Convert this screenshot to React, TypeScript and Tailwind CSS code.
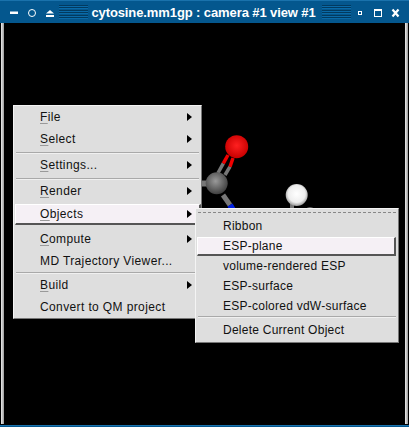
import React from "react";

const sans = "font-['Liberation_Sans',Arial,sans-serif]";

function Stripes() {
  return (
    <div className="flex h-[14px] w-[29px] shrink-0 flex-col justify-between overflow-hidden">
      {[0, 1, 2, 3, 4, 5].map((i) => (
        <div key={i} className="h-[2px] bg-[#023a60] border-b border-[#0a6aa8]" />
      ))}
    </div>
  );
}

function TitleBar() {
  return (
    <div className="flex h-[23px] items-center bg-[#04578e] pl-[10px] pr-[9px] border-t border-[#1a72ac]">
      <svg width="44" height="14" viewBox="0 0 44 14" className="shrink-0">
        <rect x="0" y="6.5" width="8" height="2.5" fill="#fff" />
        <circle cx="22" cy="8" r="3.5" fill="none" stroke="#fff" strokeWidth="1" />
        <path d="M36 8.5 L40 5 L44 8.5 Z" fill="#fff" />
        <rect x="36" y="10" width="8" height="2" fill="#fff" />
      </svg>
      <div className="ml-[5px]">
        <Stripes />
      </div>
      <div className={`${sans} flex-1 pr-[3px] pt-[1px] text-center text-[13px] font-bold leading-none text-white tracking-[-0.1px] whitespace-nowrap`}>
        cytosine.mm1gp : camera #1 view #1
      </div>
      <Stripes />
      <svg width="49" height="14" viewBox="0 0 49 14" className="shrink-0">
        <rect x="7.5" y="6.5" width="3" height="3" fill="none" stroke="#fff" />
        <rect x="23.5" y="4.5" width="7" height="7" fill="none" stroke="#fff" />
        <rect x="23" y="4" width="8" height="2" fill="#fff" />
        <path d="M41.5 4.5 L47.5 11.5 M47.5 4.5 L41.5 11.5" stroke="#fff" strokeWidth="2.2" />
      </svg>
    </div>
  );
}

function Molecule() {
  return (
    <svg width="140" height="100" viewBox="0 0 140 100" className="absolute left-[195px] top-[125px]">
      <defs>
        <radialGradient id="red" cx="0.5" cy="0.45" r="0.55">
          <stop offset="0" stopColor="#ff2020" />
          <stop offset="1" stopColor="#c80000" />
        </radialGradient>
        <radialGradient id="grey" cx="0.45" cy="0.4" r="0.6">
          <stop offset="0" stopColor="#9a9a9a" />
          <stop offset="1" stopColor="#404040" />
        </radialGradient>
        <radialGradient id="white" cx="0.5" cy="0.45" r="0.55">
          <stop offset="0" stopColor="#ffffff" />
          <stop offset="0.7" stopColor="#eeeeee" />
          <stop offset="1" stopColor="#999999" />
        </radialGradient>
      </defs>
      <path d="M23 48 L28.3 38.3" stroke="#777" strokeWidth="3.5" />
      <path d="M30 50 L35 41.7" stroke="#777" strokeWidth="3.5" />
      <path d="M28.3 38.3 L33 30" stroke="#f00000" strokeWidth="3.5" />
      <path d="M35 41.7 L38 33" stroke="#f00000" strokeWidth="3.5" />
      <path d="M28 70 L35 80" stroke="#777" strokeWidth="5" />
      <path d="M35 80 L38 85" stroke="#0020e0" strokeWidth="6" />
      <path d="M6 58.5 L14 58.5" stroke="#777" strokeWidth="6" />
      <circle cx="41.7" cy="21.7" r="11.5" fill="url(#red)" />
      <circle cx="21.7" cy="58.3" r="11" fill="url(#grey)" />
      <path d="M97 78 L97 84" stroke="#777" strokeWidth="4" />
      <circle cx="115" cy="88" r="6" fill="#666" />
      <circle cx="101.7" cy="70" r="11" fill="url(#white)" />
    </svg>
  );
}

function Item({
  label,
  mnemonic,
  arrow,
  active,
  className = "",
}: {
  label: string;
  mnemonic?: boolean;
  arrow?: boolean;
  active?: boolean;
  className?: string;
}) {
  return (
    <div
      className={`flex items-center pl-[24px] pr-[7px] ${className} ${
        active ? "bg-[#f5f0f5] border-t border-l border-white border-b-2 border-r-2 border-b-[#555] border-r-[#555]" : ""
      }`}
    >
      <span className="flex-1 whitespace-nowrap">
        {mnemonic ? (
          <>
            <span className="underline decoration-[#999] underline-offset-2">{label[0]}</span>
            {label.slice(1)}
          </>
        ) : (
          label
        )}
      </span>
      {arrow && (
        <svg width="5" height="8" viewBox="0 0 5 8">
          <path d="M0 0 L5 4 L0 8 Z" fill="#000" />
        </svg>
      )}
    </div>
  );
}

function Sep({ className = "" }: { className?: string }) {
  return <div className={`h-[2px] bg-[#a9a9a9] border-b border-[#f0f0f0] ${className}`} />;
}

const menuBox = `${sans} absolute bg-[#dedede] border border-t-[#f4f4f4] border-l-[#f4f4f4] border-r-[#777] border-b-[#777] text-[12px] leading-none text-[#111]`;

function MainMenu() {
  return (
    <div className={`${menuBox} left-[13px] top-[105px] w-[189px] h-[214px] pt-[1px] pl-[2px] pr-[2px] tracking-[0.38px]`}>
      <Item label="File" mnemonic arrow className="h-[22px] pb-[2px]" />
      <Item label="Select" mnemonic arrow className="h-[22px] pb-[2px]" />
      <Sep className="mt-[1px]" />
      <Item label="Settings..." mnemonic arrow className="h-[24px] pb-[2px]" />
      <Sep />
      <Item label="Render" mnemonic arrow className="h-[24px] pb-[2px]" />
      <Item label="Objects" mnemonic arrow active className="h-[21px] mr-[-2px] ml-[-1px] pb-[1px]" />
      <Item label="Compute" mnemonic arrow className="h-[23px] mt-[3px] pb-[2px]" />
      <Item label="MD Trajectory Viewer..." className="h-[21px] pb-[2px]" />
      <Sep />
      <Item label="Build" mnemonic arrow className="h-[23px] pb-[2px]" />
      <Item label="Convert to QM project" className="h-[22px] pb-[2px]" />
    </div>
  );
}

function SubMenu() {
  return (
    <div className={`${menuBox} left-[195px] top-[208px] w-[204px] h-[135px] pt-[3px] pl-[2px] pr-[2px] tracking-[0.25px]`}>
      <div className="h-[1px] border-t border-dashed border-[#888]" />
      <Item label="Ribbon" className="h-[24px] pl-[25px] pt-[2px]" />
      <Item label="ESP-plane" active className="h-[19px] pl-[25px] ml-[-1px]" />
      <Item label="volume-rendered ESP" className="h-[20px] pl-[25px]" />
      <Item label="ESP-surface" className="h-[20px] pl-[25px]" />
      <Item label="ESP-colored vdW-surface" className="h-[20px] pl-[25px]" />
      <Sep />
      <Item label="Delete Current Object" className="h-[23px] pl-[25px]" />
    </div>
  );
}

export default function App() {
  return (
    <div className="relative h-[427px] w-[409px] overflow-hidden bg-black">
      <TitleBar />
      <div className="flex h-[401px]">
        <div className="w-[1px] bg-black" />
        <div className="w-[3px] bg-gradient-to-r from-[#eeeeee] to-[#999999]" />
        <div className="flex-1 bg-black" />
        <div className="w-[3px] bg-gradient-to-r from-[#eeeeee] to-[#999999]" />
        <div className="w-[1px] bg-black" />
      </div>
      <div className="mt-[1px] h-[2px] bg-[#04578e] border-t border-[#1a72ac]" />
      <Molecule />
      <MainMenu />
      <SubMenu />
    </div>
  );
}
